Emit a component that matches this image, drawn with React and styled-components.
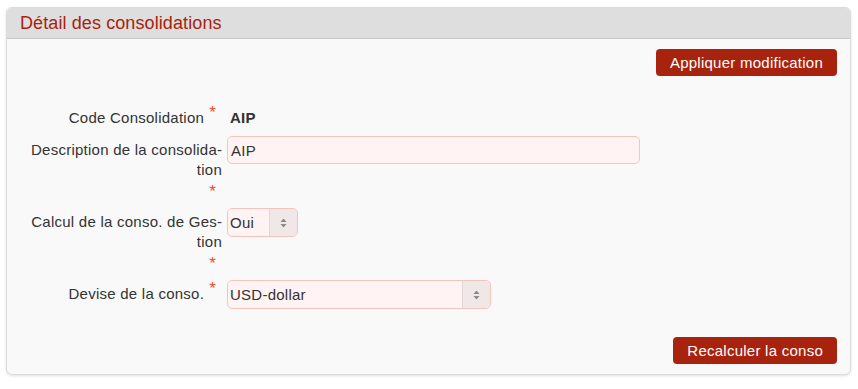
import React from 'react';
import styled, { createGlobalStyle } from 'styled-components';

const Red = '#a8230e';
const Star = '#ef4a2e';

const GlobalStyle = createGlobalStyle`
  body {
    margin: 0;
    background: #fff;
    font-family: 'Liberation Sans', Arial, sans-serif;
    font-size: 15px;
    letter-spacing: 0.25px;
    color: #333;
  }
`;

const Page = styled.div`
  padding: 7px 7px 14px 6px;
`;

const Panel = styled.section`
  border: 1px solid #dcdcdc;
  border-radius: 6px;
  background: #f9f9f9;
  box-shadow: 0 1px 3px rgba(0, 0, 0, 0.12);
  overflow: hidden;
`;

const Header = styled.header`
  height: 30px;
  padding: 0 13px;
  display: flex;
  align-items: center;
  background: #dedede;
  border-bottom: 1px solid #c9c9c9;
`;

const Title = styled.h2`
  margin: 0;
  font-size: 18px;
  letter-spacing: 0.1px;
  font-weight: normal;
  color: ${Red};
`;

const Body = styled.div`
  padding: 10px 13px 10px 20px;
`;

const Actions = styled.div`
  display: flex;
  justify-content: flex-end;
  margin-top: ${(p) => p.$top || 0}px;
`;

const Button = styled.button`
  height: 27px;
  padding: 0 14px;
  border: none;
  border-radius: 4px;
  background: ${Red};
  color: #fff;
  font: inherit;
  letter-spacing: inherit;
  cursor: pointer;
`;

const Form = styled.div`
  margin-top: 32px;
  display: grid;
  grid-template-columns: 195px 1fr;
  column-gap: 5px;
  row-gap: 8px;
  align-items: start;
`;

const Label = styled.div`
  text-align: right;
  line-height: 20px;
  padding-top: ${(p) => (p.$static ? 0 : 4)}px;
`;

const LabelText = styled.span`
  display: inline-block;
`;

const Required = styled.span`
  padding: 0 6px 0 5px;
  color: ${Star};
  font-size: 17px;
  line-height: 0;
  vertical-align: ${(p) => (p.$alone ? -2 : 5)}px;
`;

const Value = styled.div`
  line-height: 20px;
  padding-left: 3px;
  font-weight: bold;
`;

const TextInput = styled.input`
  box-sizing: border-box;
  width: ${(p) => p.$w}px;
  height: 28px;
  padding: 0 3px;
  border: 1px solid #f5c2bc;
  border-radius: 5px;
  background: #fff4f3;
  font: inherit;
  letter-spacing: inherit;
  color: #333;
  outline: none;
`;

const SelectBox = styled.div`
  box-sizing: border-box;
  width: ${(p) => p.$w}px;
  height: 29px;
  display: flex;
  border: 1px solid #f5c2bc;
  border-radius: 5px;
  background: #fff4f3;
  overflow: hidden;
`;

const NativeSelect = styled.select`
  flex: 1;
  min-width: 0;
  appearance: none;
  border: none;
  background: transparent;
  padding: 0 2px;
  font: inherit;
  letter-spacing: inherit;
  color: #333;
  outline: none;
`;

const Arrow = styled.span`
  width: 27px;
  display: flex;
  align-items: center;
  justify-content: center;
  background: #f0e7e7;
  border-left: 1px solid #e3d6d6;
`;

const Updown = () => (
  <svg width="7" height="10" viewBox="0 0 7 10">
    <path d="M3.5 0.5 L6.5 4 H0.5 Z M3.5 9.5 L6.5 6 H0.5 Z" fill="#8a8a8a" />
  </svg>
);

const Select = ({ w, value, options }) => (
  <SelectBox $w={w}>
    <NativeSelect defaultValue={value}>
      {options.map((o) => (
        <option key={o}>{o}</option>
      ))}
    </NativeSelect>
    <Arrow>
      <Updown />
    </Arrow>
  </SelectBox>
);

const Field = ({ label, isStatic, wraps, children }) => (
  <>
    <Label $static={isStatic}>
      <LabelText>{label}</LabelText>
      <Required $alone={wraps}>*</Required>
    </Label>
    <div>{children}</div>
  </>
);

export default function App() {
  return (
    <Page>
      <GlobalStyle />
      <Panel>
        <Header>
          <Title>Détail des consolidations</Title>
        </Header>
        <Body>
          <Actions>
            <Button>Appliquer modification</Button>
          </Actions>
          <Form>
            <Field label="Code Consolidation" isStatic>
              <Value>AIP</Value>
            </Field>
            <Field label={'Description de la consolida\u00ADtion'} wraps>
              <TextInput $w={413} defaultValue="AIP" />
            </Field>
            <Field label={'Calcul de la conso. de Ges\u00ADtion'} wraps>
              <Select w={71} value="Oui" options={['Oui', 'Non']} />
            </Field>
            <Field label="Devise de la conso.">
              <Select w={264} value="USD-dollar" options={['USD-dollar', 'EUR-euro']} />
            </Field>
          </Form>
          <Actions $top={28}>
            <Button>Recalculer la conso</Button>
          </Actions>
        </Body>
      </Panel>
    </Page>
  );
}
